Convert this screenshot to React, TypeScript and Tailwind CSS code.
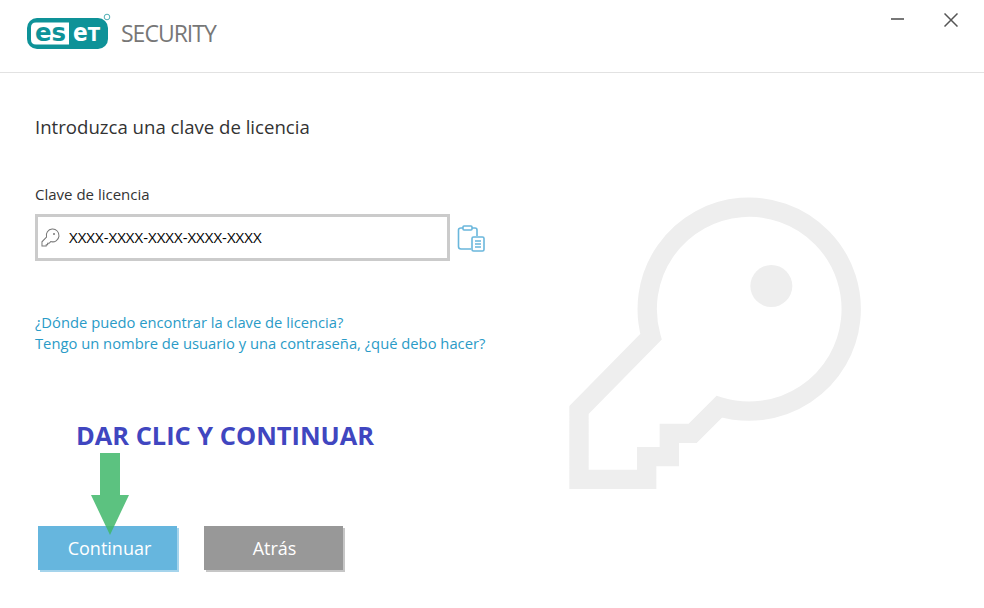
const KEY_PATH =
  "M508 650 A306 306 0 1 0 303 440 L87 660 L87 868 L290 868 L290 800 L358 800 L358 730 L428 730 Z"

function KeyShape({ strokeWidth, color, holeR }: { strokeWidth: number; color: string; holeR: number }) {
  return (
    <>
      <path d={KEY_PATH} fill="none" stroke={color} strokeWidth={strokeWidth} />
      <circle cx="664" cy="288" r={holeR} fill={color} />
    </>
  )
}

function Logo() {
  const font = "'DejaVu Sans', sans-serif"
  return (
    <svg width="84" height="37" viewBox="0 0 84 37" className="block">
      <rect x="0" y="5" width="81" height="31" rx="10" fill="#0e9298" />
      <path d="M9 9.5 H42 V31.5 H9 Q4 31.5 4 26.5 V14.5 Q4 9.5 9 9.5 Z" fill="#fff" />
      <text x="8" y="27.5" fontFamily={font} fontWeight="700" fontSize="24" fill="#0e9298" textLength="31" lengthAdjust="spacingAndGlyphs">es</text>
      <text x="46" y="27.5" fontFamily={font} fontWeight="700" fontSize="24" fill="#fff" textLength="27" lengthAdjust="spacingAndGlyphs">
        e<tspan fontSize="20">T</tspan>
      </text>
      <circle cx="80" cy="4" r="2.8" fill="none" stroke="#3aa5ab" strokeWidth="0.9" />
    </svg>
  )
}

function ClipboardIcon() {
  return (
    <svg width="28" height="28" viewBox="0 0 28 28" fill="none" stroke="#6ab7dc" strokeWidth="1.6">
      <path d="M14 24 H4 Q1.5 24 1.5 21.5 V5 Q1.5 3 4 3 H18 Q20 3 20 5 V11" />
      <rect x="6" y="1" width="9" height="4" rx="1" fill="#fff" />
      <rect x="15" y="12" width="12" height="14" rx="1.5" fill="#fff" />
      <path d="M18 16 H24 M18 19 H24 M18 22 H24" />
    </svg>
  )
}

export default function App() {
  return (
    <div className="w-[984px] h-[608px] overflow-hidden bg-white text-[#333] font-['Open_Sans',sans-serif]">
      {/* header */}
      <div className="h-[73px] border-b border-[#e2e2e2] flex pl-[27px] pt-[13px]">
        <Logo />
        <span className="ml-[10px] mt-[8px] h-[24px] leading-[24px] text-[23px] tracking-[-1px] text-[#777]">SECURITY</span>
        <div className="ml-auto flex pr-[26px] gap-[40px]">
          <div className="w-[13px] h-[2px] mt-[5px] bg-[#777]"></div>
          <svg width="14" height="14" viewBox="0 0 14 14" stroke="#555" strokeWidth="1.5">
            <path d="M0.5 0.5 L13.5 13.5 M13.5 0.5 L0.5 13.5" />
          </svg>
        </div>
      </div>

      <div className="flex">
        {/* form */}
        <div className="w-[569px] shrink-0 pl-[35px]">
          <h1 className="mt-[42px] text-[18.6px] leading-[24px] font-normal">Introduzca una clave de licencia</h1>
          <div className="mt-[45px] text-[15px] leading-[20px]">Clave de licencia</div>
          <div className="mt-[10px] flex items-center">
            <div className="w-[415px] h-[47px] border-[3px] border-[#cbcbcb] flex items-center pl-[3px]">
              <svg width="19" height="19" viewBox="40 0 910 910" className="shrink-0">
                <KeyShape strokeWidth={48} color="#777" holeR={48} />
              </svg>
              <span className="ml-[9px] text-[15px] text-black">XXXX-XXXX-XXXX-XXXX-XXXX</span>
            </div>
            <div className="ml-[7px] mt-[3px]">
              <ClipboardIcon />
            </div>
          </div>
          <div className="mt-[51px] text-[14.75px] leading-[21px] text-[#2a9bc7]">
            <div>¿Dónde puedo encontrar la clave de licencia?</div>
            <div>Tengo un nombre de usuario y una contraseña, ¿qué debo hacer?</div>
          </div>
          <div className="mt-[65px] pl-[41px] text-[25.4px] leading-[32px] font-bold text-[#4046c0]">DAR CLIC Y CONTINUAR</div>
          <div className="mt-[75px] ml-[3px] flex gap-[27px]">
            <div className="relative w-[139px] h-[44px] bg-[#66b6de] shadow-[2px_2px_0_#a5d4ec] flex items-center justify-center pl-[4px] text-[18px] text-white">
              Continuar
              {/* annotation arrow */}
              <svg width="38" height="82" viewBox="0 0 38 82" className="absolute left-[53px] top-[-73px]">
                <path d="M9 0 H29 V42 H38 L19 82 L0 42 H9 Z" fill="#3fb76a" fillOpacity="0.85" />
              </svg>
            </div>
            <div className="w-[139px] h-[44px] bg-[#989898] shadow-[2px_2px_0_#c6c6c6] flex items-center justify-center pl-[2px] text-[18px] text-white">
              Atrás
            </div>
          </div>
        </div>

        {/* watermark key */}
        <div className="pt-[117px] ml-[-19px]">
          <svg width="330" height="310" viewBox="0 0 990 930">
            <KeyShape strokeWidth={58} color="#eeeeee" holeR={63} />
          </svg>
        </div>
      </div>
    </div>
  )
}
